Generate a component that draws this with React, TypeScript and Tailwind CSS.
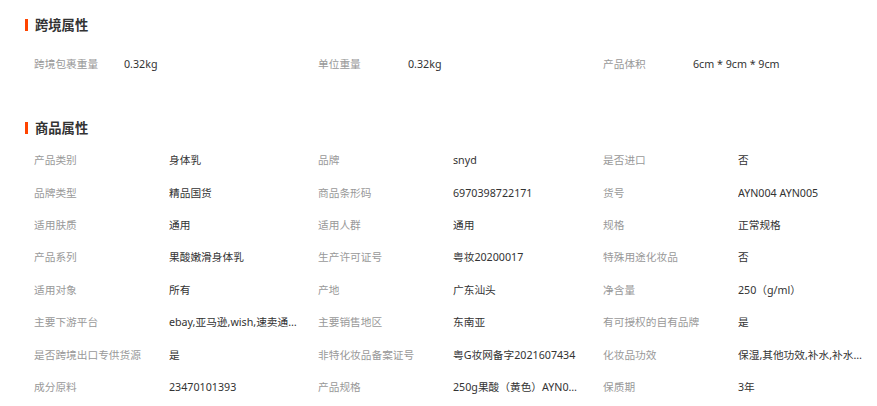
const crossBorder = [
  { label: "跨境包裹重量", value: "0.32kg" },
  { label: "单位重量", value: "0.32kg" },
  { label: "产品体积", value: "6cm * 9cm * 9cm" },
];

const productAttrs = [
  { label: "产品类别", value: "身体乳" },
  { label: "品牌", value: "snyd" },
  { label: "是否进口", value: "否" },
  { label: "品牌类型", value: "精品国货" },
  { label: "商品条形码", value: "6970398722171" },
  { label: "货号", value: "AYN004 AYN005" },
  { label: "适用肤质", value: "通用" },
  { label: "适用人群", value: "通用" },
  { label: "规格", value: "正常规格" },
  { label: "产品系列", value: "果酸嫩滑身体乳" },
  { label: "生产许可证号", value: "粤妆20200017" },
  { label: "特殊用途化妆品", value: "否" },
  { label: "适用对象", value: "所有" },
  { label: "产地", value: "广东汕头" },
  { label: "净含量", value: "250（g/ml）" },
  { label: "主要下游平台", value: "ebay,亚马逊,wish,速卖通,独立站,LAZADA" },
  { label: "主要销售地区", value: "东南亚" },
  { label: "有可授权的自有品牌", value: "是" },
  { label: "是否跨境出口专供货源", value: "是" },
  { label: "非特化妆品备案证号", value: "粤G妆网备字2021607434" },
  { label: "化妆品功效", value: "保湿,其他功效,补水,补水保湿,嫩滑" },
  { label: "成分原料", value: "23470101393" },
  { label: "产品规格", value: "250g果酸（黄色）AYN004 AYN005" },
  { label: "保质期", value: "3年" },
];

function Heading({ title }: { title: string }) {
  return (
    <div className="flex h-5 items-center gap-[7px] pl-[25px]">
      <span className="h-3 w-[3px] bg-[#ff4400]" />
      <h3 className="text-[13.3px] font-bold leading-5 text-[#333]">{title}</h3>
    </div>
  );
}

export default function App() {
  return (
    <div
      className="w-[877px] overflow-hidden bg-white text-[10.7px]"
      style={{ fontFamily: '"Noto Sans", "Noto Sans CJK SC", sans-serif' }}
    >
      {/* 跨境属性 */}
      <section className="pt-[15px]">
        <Heading title="跨境属性" />
        <div className="mt-[13px] grid grid-cols-[284px_285px_1fr] pl-[34px]">
          {crossBorder.map((item) => (
            <div key={item.label} className="flex h-8 items-center">
              <span className="w-[90px] shrink-0 text-[#999]">{item.label}</span>
              <span className="text-[#333]">{item.value}</span>
            </div>
          ))}
        </div>
      </section>

      {/* 商品属性 */}
      <section className="pt-[38px]">
        <Heading title="商品属性" />
        <div className="mt-[6px] grid grid-cols-[284px_285px_1fr] pl-[34px]">
          {productAttrs.map((item) => (
            <div key={item.label} className="flex h-[32.4px] items-center">
              <span className="w-[135px] shrink-0 truncate text-[#999]">{item.label}</span>
              <span className="w-[130px] truncate text-[#333]">{item.value}</span>
            </div>
          ))}
        </div>
      </section>
    </div>
  );
}
